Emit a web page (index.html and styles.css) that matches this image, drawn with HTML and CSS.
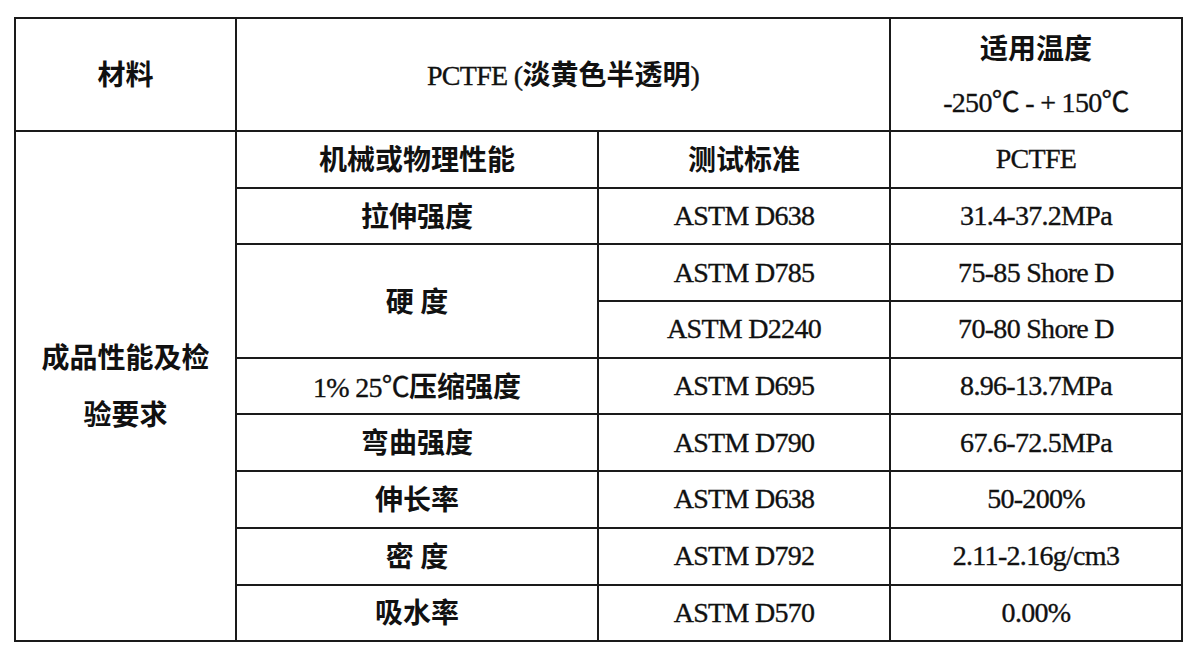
FILE: index.html
```html
<!DOCTYPE html>
<html lang="zh-CN">
<head>
<meta charset="utf-8">
<title>PCTFE</title>
<link rel="stylesheet" href="styles.css">
</head>
<body>
<div class="page">
<table class="spec">
<colgroup><col class="c1"><col class="c2"><col class="c3"><col class="c4"></colgroup>
<tr class="head">
<td><span class="cn">材料</span></td>
<td colspan="2">PCTFE (<span class="cn">淡黄色半透明</span>)</td>
<td class="multi"><div class="cn">适用温度</div><div>-250℃ - + 150℃</div></td>
</tr>
<tr class="row">
<td rowspan="9" class="multi"><span class="cn">成品性能及检<br>验要求</span></td>
<td><span class="cn">机械或物理性能</span></td>
<td><span class="cn">测试标准</span></td>
<td>PCTFE</td>
</tr>
<tr class="row"><td><span class="cn">拉伸强度</span></td><td>ASTM D638</td><td>31.4-37.2MPa</td></tr>
<tr class="row"><td rowspan="2"><span class="cn">硬 度</span></td><td>ASTM D785</td><td>75-85 Shore D</td></tr>
<tr class="row"><td>ASTM D2240</td><td>70-80 Shore D</td></tr>
<tr class="row"><td>1% 25℃<span class="cn">压缩强度</span></td><td>ASTM D695</td><td>8.96-13.7MPa</td></tr>
<tr class="row"><td><span class="cn">弯曲强度</span></td><td>ASTM D790</td><td>67.6-72.5MPa</td></tr>
<tr class="row"><td><span class="cn">伸长率</span></td><td>ASTM D638</td><td>50-200%</td></tr>
<tr class="row"><td><span class="cn">密 度</span></td><td>ASTM D792</td><td>2.11-2.16g/cm3</td></tr>
<tr class="row"><td><span class="cn">吸水率</span></td><td>ASTM D570</td><td>0.00%</td></tr>
</table>
</div>
</body>
</html>
```
FILE: styles.css
```css
html, body {
  margin: 0;
  background: #fff;
}
.page {
  padding: 17px 0 0 14px;
}
.spec {
  border-collapse: collapse;
  table-layout: fixed;
  width: 1169px;
  font-family: "Liberation Serif", "Noto Sans CJK SC", serif;
  font-size: 28px;
  letter-spacing: -0.7px;
  color: #111;
  -webkit-text-stroke: 0.35px #111;
}
.c1 { width: 221px; }
.c2 { width: 362px; }
.c3 { width: 292px; }
.c4 { width: 292px; }
.spec td {
  border: 2px solid #1a1a1a;
  text-align: center;
  vertical-align: middle;
  padding: 0;
  line-height: 30px;
  white-space: nowrap;
}
.head td {
  height: 111px;
}
.row td {
  height: 54.7px;
}
.spec td.multi {
  line-height: 55px;
}
.cn {
  font-family: "Noto Sans CJK SC", sans-serif;
  font-weight: 700;
  letter-spacing: 0;
  -webkit-text-stroke: 0;
}
```
